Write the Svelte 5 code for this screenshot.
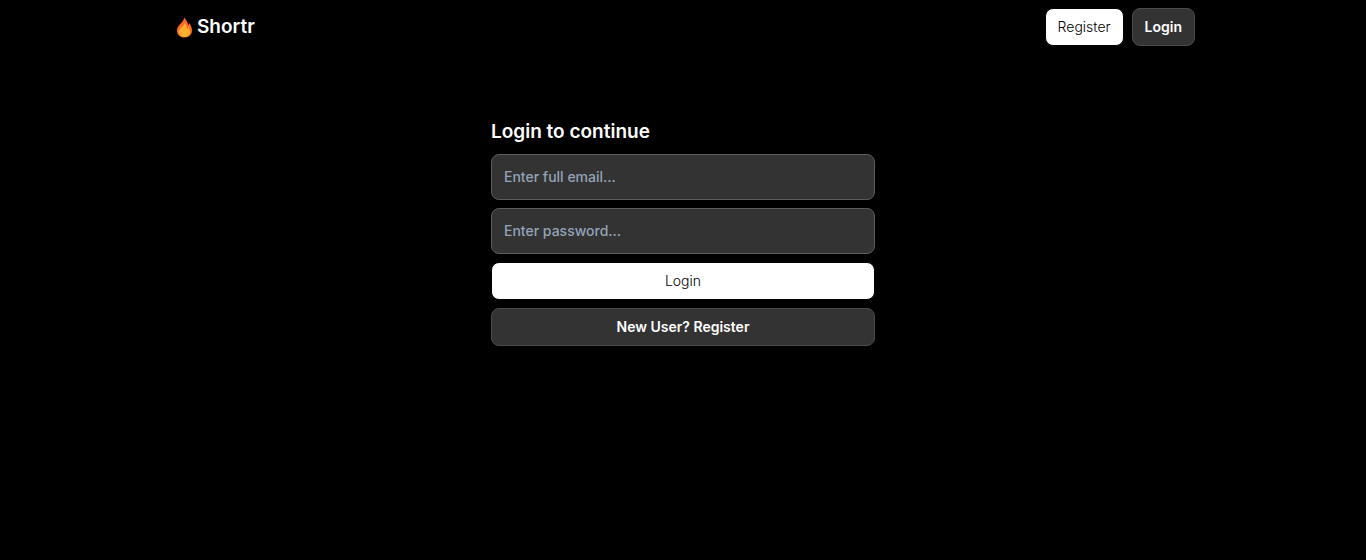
<script>
  let email = $state('');
  let password = $state('');
</script>

<div class="page">
  <header>
    <a class="brand" href="#home">
      <svg class="flame" viewBox="0 0 32 42" aria-hidden="true">
        <path fill="#ff6822" d="M15 1C15 9 7 13 3 20C1 23 1 26 1 28C1 36 8 41 16 41C25 41 31 35 31 27C31 22 29 18 27 14C26 12 25 12 25 14L24 17C22 10 19 5 15 1Z" />
        <path fill="#ffb02e" d="M16 12C16 18 6 21 5 29C4 36 10 40 16 40C23 40 28 35 27 29C26 25 25 22 23 19C23 22 22 24 21 25C21 20 19 15 16 12Z" />
      </svg>
      <span>Shortr</span>
    </a>
    <nav>
      <a class="button light" href="#register">Register</a>
      <a class="button dark" href="#login">Login</a>
    </nav>
  </header>

  <main>
    <form onsubmit={(e) => e.preventDefault()}>
      <h1>Login to continue</h1>
      <input type="email" aria-label="Email" placeholder="Enter full email..." bind:value={email} />
      <input type="password" aria-label="Password" placeholder="Enter password..." bind:value={password} />
      <button class="button light" type="submit">Login</button>
      <button class="button dark" type="button">New User? Register</button>
    </form>
  </main>
</div>

<style>
  :global(body) {
    margin: 0;
    background: #000;
  }

  .page {
    min-height: 100vh;
    color: #fff;
    font-family: Inter, sans-serif;
    font-size: 14px;
    line-height: 20px;
  }

  header {
    display: flex;
    align-items: center;
    justify-content: space-between;
    box-sizing: border-box;
    max-width: 1024px;
    margin: 0 auto;
    padding: 8px 0;
  }

  .brand {
    display: flex;
    align-items: center;
    gap: 4px;
    padding-left: 5px;
    color: #fff;
    font-size: 19px;
    font-weight: 600;
    line-height: 28px;
    text-decoration: none;
  }

  .flame {
    width: 17px;
    height: 21px;
  }

  nav {
    display: flex;
    gap: 8px;
  }

  .button {
    box-sizing: border-box;
    padding: 8px 12px;
    border: 1px solid #000;
    border-radius: 8px;
    font: inherit;
    text-align: center;
    text-decoration: none;
    cursor: pointer;
  }

  .light {
    background: #fff;
    color: #000;
    font-weight: 300;
  }

  .dark {
    border-color: #4b4b4b;
    background: #333;
    color: #fff;
    font-weight: 600;
  }

  main {
    display: flex;
    justify-content: center;
    padding-top: 64px;
  }

  form {
    display: flex;
    flex-direction: column;
    gap: 8px;
    width: 100%;
    max-width: 384px;
  }

  h1 {
    margin: 0;
    font-size: 19px;
    font-weight: 600;
    line-height: 28px;
  }

  input {
    box-sizing: border-box;
    width: 100%;
    padding: 12px;
    border: 1px solid #5c5c5c;
    border-radius: 8px;
    background: #333;
    color: #fff;
    font: inherit;
    font-weight: 500;
  }

  input::placeholder {
    color: #94a3b8;
    opacity: 1;
  }
</style>
